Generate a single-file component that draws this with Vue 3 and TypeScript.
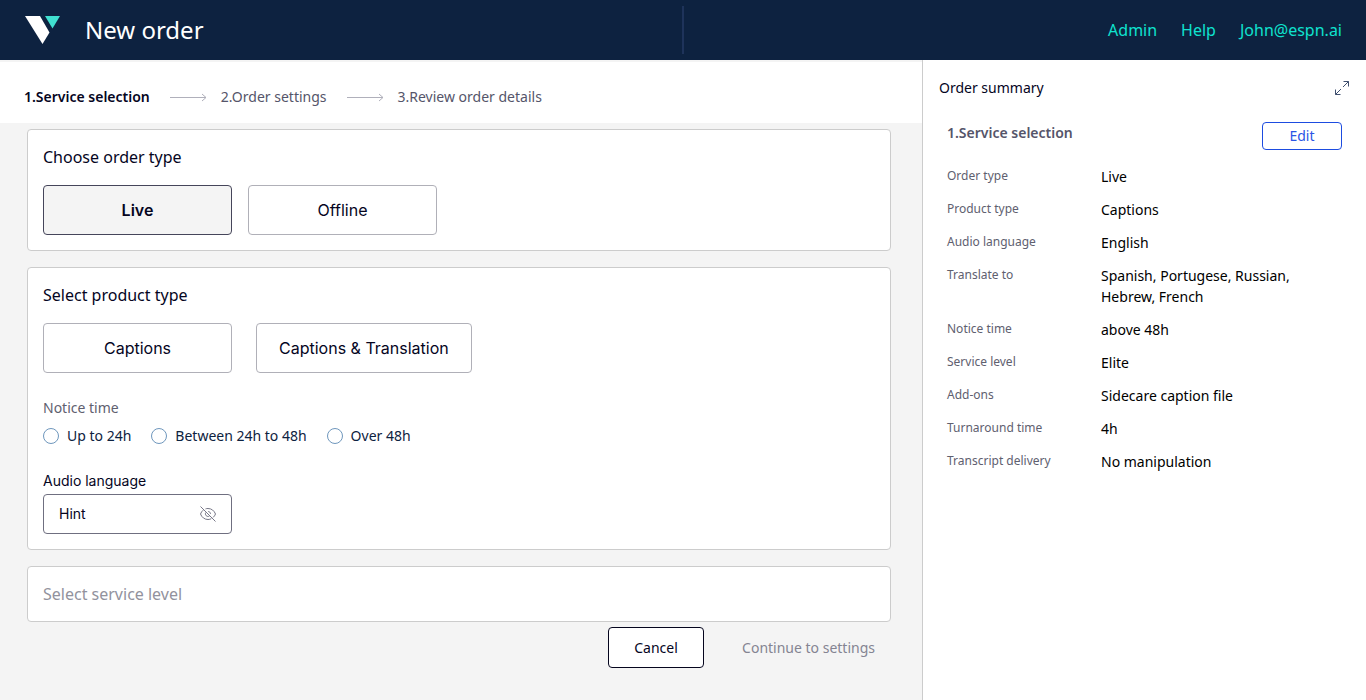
<script setup lang="ts">
import { ref } from 'vue'

interface SummaryRow {
  label: string
  value: string
}

const steps: string[] = ['1.Service selection', '2.Order settings', '3.Review order details']
const noticeTimes: string[] = ['Up to 24h', 'Between 24h to 48h', 'Over 48h']
const orderTypes: string[] = ['Live', 'Offline']
const productTypes: string[] = ['Captions', 'Captions & Translation']

const summary: SummaryRow[] = [
  { label: 'Order type', value: 'Live' },
  { label: 'Product type', value: 'Captions' },
  { label: 'Audio language', value: 'English' },
  { label: 'Translate to', value: 'Spanish, Portugese, Russian, Hebrew, French' },
  { label: 'Notice time', value: 'above 48h' },
  { label: 'Service level', value: 'Elite' },
  { label: 'Add-ons', value: 'Sidecare caption file' },
  { label: 'Turnaround time', value: '4h' },
  { label: 'Transcript delivery', value: 'No manipulation' },
]

const orderType = ref<string>('Live')
const productType = ref<string>('')
const noticeTime = ref<string>('')
const audioLanguage = ref<string>('')
</script>

<template>
  <div class="page">
    <header class="topbar">
      <div class="brand">
        <svg class="logo" viewBox="0 0 36 28" aria-hidden="true">
          <path d="M0 0H15L24.500 16.500L17.500 28Z" fill="#fff" />
          <path d="M20 0H35L27.500 12.500Z" fill="#40e0d0" />
        </svg>
        <h1>New order</h1>
      </div>
      <span class="divider"></span>
      <nav class="links">
        <a href="#admin">Admin</a>
        <a href="#help">Help</a>
        <a href="#account">John@espn.ai</a>
      </nav>
    </header>

    <div class="body">
      <main class="main">
        <ol class="steps">
          <li v-for="(step, i) in steps" :key="step" :class="{ current: i === 0 }">
            <svg v-if="i > 0" class="arrow" viewBox="0 0 37 9" aria-hidden="true">
              <path d="M0 4.500H36M32 1L36 4.500L32 8" />
            </svg>
            <span>{{ step }}</span>
          </li>
        </ol>

        <div class="content">
          <section class="card">
            <h2>Choose order type</h2>
            <div class="options">
              <button
                v-for="type in orderTypes"
                :key="type"
                type="button"
                class="option"
                :class="{ selected: orderType === type }"
                @click="orderType = type"
              >{{ type }}</button>
            </div>
          </section>

          <section class="card">
            <h2>Select product type</h2>
            <div class="options wide">
              <button
                v-for="type in productTypes"
                :key="type"
                type="button"
                class="option"
                :class="{ selected: productType === type }"
                @click="productType = type"
              >{{ type }}</button>
            </div>

            <fieldset class="notice">
              <legend>Notice time</legend>
              <div class="radios">
                <label v-for="time in noticeTimes" :key="time">
                  <input v-model="noticeTime" type="radio" name="notice" :value="time" />
                  {{ time }}
                </label>
              </div>
            </fieldset>

            <div class="field">
              <label for="audio-language">Audio language</label>
              <div class="control">
                <input id="audio-language" v-model="audioLanguage" type="text" placeholder="Hint" />
                <svg class="eye" viewBox="0 0 16 16" aria-hidden="true">
                  <path d="M0.500 0.500L15.500 15.500" />
                  <path d="M5.500 2.900C6.300 2.600 7.100 2.500 8 2.500C11.500 2.500 14.200 4.700 15.500 8C15 9.300 14.200 10.500 13.200 11.400" />
                  <path d="M3.200 4.200C2 5.100 1.100 6.400 0.500 8C1.800 11.300 4.500 13.500 8 13.500C9.200 13.500 10.300 13.200 11.300 12.700" />
                  <path d="M5.800 6.500C5.200 7.400 5.300 8.800 6.200 9.700C7.100 10.600 8.500 10.700 9.500 10" />
                  <path d="M8.200 5.500C9.500 5.600 10.500 6.500 10.500 7.900" />
                </svg>
              </div>
            </div>
          </section>

          <section class="card pending">
            <h2>Select service level</h2>
          </section>

          <div class="actions">
            <button type="button" class="cancel">Cancel</button>
            <button type="button" class="continue" disabled>Continue to settings</button>
          </div>
        </div>
      </main>

      <aside class="summary">
        <div class="summary-head">
          <h2>Order summary</h2>
          <button type="button" class="expand" aria-label="Expand order summary">
            <svg viewBox="0 0 14 14" aria-hidden="true">
              <path d="M8.500 0.500H13.500V5.500M13.500 0.500L8 6M5.500 13.500H0.500V8.500M0.500 13.500L6 8" />
            </svg>
          </button>
        </div>
        <section class="summary-section">
          <div class="section-head">
            <h3>1.Service selection</h3>
            <button type="button" class="edit">Edit</button>
          </div>
          <dl>
            <div v-for="row in summary" :key="row.label" class="row">
              <dt>{{ row.label }}</dt>
              <dd>{{ row.value }}</dd>
            </div>
          </dl>
        </section>
      </aside>
    </div>
  </div>
</template>

<style>
body {
  margin: 0;
}
</style>

<style scoped>
.page {
  display: flex;
  flex-direction: column;
  min-height: 100vh;
  background: #f4f4f4;
  color: #05051e;
  font-family: "Noto Sans", "Open Sans", sans-serif;
  font-size: 14px;
  line-height: 20px;
}

.page * {
  box-sizing: border-box;
}

h1, h2, h3, dl, dd, ol {
  margin: 0;
  padding: 0;
  font-weight: 400;
}

button, input {
  font: inherit;
  color: inherit;
}

button {
  padding: 0;
  cursor: pointer;
}

.topbar {
  display: grid;
  grid-template-columns: 1fr 2px 1fr;
  align-items: center;
  height: 60px;
  padding: 0 24px;
  background: #0d2240;
}

.brand {
  display: flex;
  align-items: center;
  gap: 24px;
}

.logo {
  width: 36px;
  height: 28px;
  margin-left: 1px;
}

.brand h1 {
  color: #fff;
  font-size: 24px;
  line-height: 32px;
}

.divider {
  height: 48px;
  background: #1e335a;
}

.links {
  display: flex;
  justify-content: flex-end;
  gap: 24px;
  font-size: 16px;
  line-height: 24px;
}

.links a {
  color: #0fe3cf;
  text-decoration: none;
}

.body {
  display: flex;
  flex: 1;
}

.main {
  flex: 1;
  min-width: 0;
  padding-top: 2px;
}

.steps {
  display: flex;
  gap: 20px;
  padding: 25px 24px 16px;
  background: #fff;
  color: #55556a;
  list-style: none;
}

.steps li {
  display: flex;
  align-items: center;
  gap: 14px;
}

.steps .current {
  color: #05051e;
  font-weight: 600;
}

.arrow {
  width: 37px;
  height: 9px;
  fill: none;
  stroke: #b0b0bb;
}

.content {
  padding: 6px 31px 32px 27px;
}

.card {
  margin-bottom: 16px;
  padding: 15px;
  border: 1px solid #ccc;
  border-radius: 4px;
  background: #fff;
}

.card h2 {
  font-size: 16px;
  line-height: 24px;
}

.pending {
  margin-bottom: 5px;
  color: #92929d;
}

.options {
  display: flex;
  gap: 16px;
  margin-top: 16px;
}

.options.wide {
  gap: 24px;
}

.option {
  min-width: 189px;
  height: 50px;
  padding: 0 22px;
  border: 1px solid #b0b0b8;
  border-radius: 4px;
  background: #fff;
  font-family: Inter, sans-serif;
  font-size: 16px;
}

.option.selected {
  border-color: #45455a;
  background: #f4f4f4;
  font-weight: 600;
}

.notice {
  min-width: 0;
  margin: 25px 0 0;
  padding: 0;
  border: 0;
}

.notice legend {
  padding: 0;
  color: #60606f;
}

.radios {
  display: flex;
  gap: 20px;
  margin-top: 8px;
  color: #0d2240;
}

.radios label {
  display: flex;
  align-items: center;
  gap: 8px;
}

.radios input {
  appearance: none;
  width: 16px;
  height: 16px;
  margin: 0;
  border: 1px solid #6f97bd;
  border-radius: 50%;
  background: #fff;
}

.radios input:checked {
  border-width: 5px;
}

.field {
  width: 189px;
  margin-top: 25px;
  font-family: Inter, sans-serif;
}

.field label {
  display: block;
  margin-bottom: 3px;
}

.control {
  display: flex;
  align-items: center;
  gap: 8px;
  height: 40px;
  padding: 0 15px;
  border: 1px solid #6f6f80;
  border-radius: 4px;
  background: #fff;
}

.control input {
  flex: 1;
  min-width: 0;
  padding: 0;
  border: 0;
  outline: 0;
  background: none;
}

.control input::placeholder {
  color: #05051e;
  opacity: 1;
}

.eye {
  flex: none;
  width: 16px;
  height: 16px;
  fill: none;
  stroke: #777787;
}

.actions {
  display: flex;
  justify-content: flex-end;
  gap: 22px;
}

.actions button {
  height: 41px;
  border-radius: 4px;
}

.cancel {
  width: 96px;
  border: 1px solid #05051e;
  background: #fff;
}

.continue {
  padding: 0 16px;
  border: 0;
  background: none;
  color: #848492;
}

.summary {
  flex: none;
  width: 444px;
  padding: 16px;
  border-left: 1px solid #ccc;
  background: #fff;
}

.summary-head {
  display: flex;
  align-items: center;
  justify-content: space-between;
  height: 24px;
}

.summary-head h2 {
  font-size: 14px;
}

.expand {
  display: flex;
  padding-right: 1px;
  border: 0;
  background: none;
}

.expand svg {
  width: 14px;
  height: 14px;
  fill: none;
  stroke: #40506f;
}

.summary-section {
  padding: 22px 8px 0;
}

.section-head {
  display: flex;
  justify-content: space-between;
  height: 28px;
}

.section-head h3 {
  color: #55556a;
  font-size: 14px;
  font-weight: 600;
  line-height: 22px;
}

.edit {
  width: 80px;
  border: 1px solid #1d4ce0;
  border-radius: 4px;
  background: #fff;
  color: #2a55e5;
}

dl {
  display: flex;
  flex-direction: column;
  gap: 12px;
  margin-top: 16px;
}

.row {
  display: grid;
  grid-template-columns: 154px 1fr;
}

.row dt {
  color: #60606f;
  font-size: 12px;
}

.row dd {
  max-width: 208px;
  color: #000;
  line-height: 21px;
}
</style>
